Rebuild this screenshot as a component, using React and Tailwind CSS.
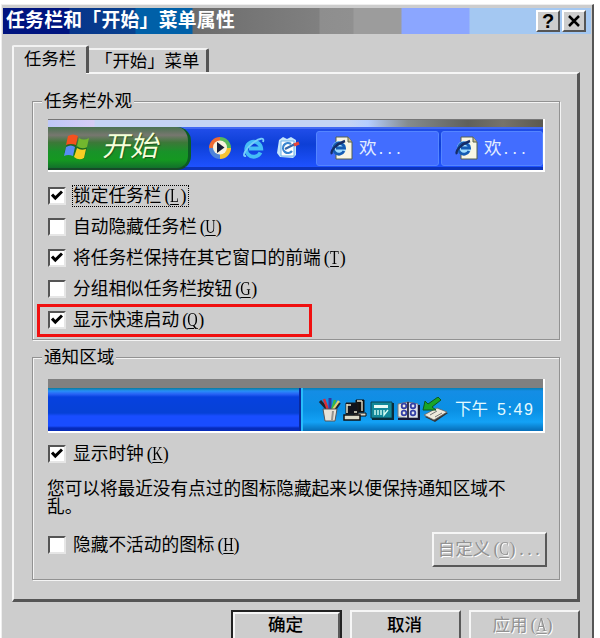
import React from "react";

const FONT = "font-['Liberation_Sans','Noto_Sans_CJK_SC',sans-serif]";

// Keyboard shortcut hint such as (L), in half-width cells
function Key({ k, after = "" }) {
  return (
    <span className="inline-flex font-['Liberation_Serif','Noto_Sans_CJK_SC',serif] text-[18px]">
      <span className="w-[9px] text-right">(</span>
      <span className="w-[9px] text-center">
        <span className="inline-block origin-center scale-x-[0.8] -mx-1 underline underline-offset-2 decoration-1">{k}</span>
      </span>
      <span className="w-[9px] pl-px">)</span>
      {after.split("").map((c, i) => (
        <span key={i} className="w-[8px] text-center">{c}</span>
      ))}
    </span>
  );
}

function Check({ checked, label, k, focus }) {
  return (
    <div className="flex h-[31px] items-center">
      <div className="flex h-[18px] w-[18px] shrink-0 items-center justify-center border-2 border-t-[#555] border-l-[#555] border-r-[#e6e6e6] border-b-[#e6e6e6] bg-white">
        {checked && (
          <svg width="12" height="12" viewBox="0 0 12 12" fill="none" stroke="#000" strokeWidth="3">
            <path d="M1 4.5 L4.3 8 L11 1.5" />
          </svg>
        )}
      </div>
      <div
        className={
          "ml-[6px] flex h-[22px] items-center whitespace-nowrap border border-dotted text-[17.7px] leading-[20px] " +
          (focus ? "border-black" : "border-transparent")
        }
      >
        <span>{label}</span>
        <Key k={k} />
      </div>
    </div>
  );
}

function Group({ title, className, children }) {
  return (
    <fieldset className={"relative ml-[18px] w-[528px] border border-[#929292] shadow-[1px_1px_0_#f4f4f4,inset_1px_1px_0_#f4f4f4] " + className}>
      <span className="absolute -top-[11px] left-[9px] bg-[#cdcdcd] px-[2px] text-[17.6px] leading-[20px]">{title}</span>
      {children}
    </fieldset>
  );
}

function Button({ children, className }) {
  return (
    <div className={"flex items-center justify-center whitespace-nowrap border-2 border-t-[#f6f6f6] border-l-[#f6f6f6] border-r-[#595959] border-b-[#595959] text-[17.6px] " + className}>
      {children}
    </div>
  );
}

function CaptionButton({ children }) {
  return (
    <div className="flex h-[22px] w-[24px] items-center justify-center border-2 border-t-white border-l-white border-r-[#555] border-b-[#555] bg-[#cdcdcd]">
      {children}
    </div>
  );
}

function WindowsFlag() {
  return (
    <svg width="28" height="28" viewBox="0 0 28 28">
      <g opacity="0.4" fill="#123c12">
        <path d="M6 4 Q11 1 15 4 L13 14 L24 15 L21 26 L12 22 L1 20 Z" />
      </g>
      <path d="M5 3 Q10 0 15 3 L13 12 Q8 10 3 12 Z" fill="#f4511e" />
      <path d="M16 5 Q21 8 26 5 L24 14 Q19 17 14 13 Z" fill="#72b72e" />
      <path d="M3 14 Q8 11 12 14 L10 23 Q5 21 1 23 Z" fill="#588df5" />
      <path d="M14 15 Q18 18 23 16 L21 25 Q16 28 11 24 Z" fill="#f6cf24" />
    </svg>
  );
}

function MediaPlayer() {
  return (
    <svg width="24" height="24" viewBox="0 0 24 24">
      <path d="M12 12 L1 12 A11 11 0 0 1 12 1 Z" fill="#ee6a31" />
      <path d="M12 12 L12 1 A11 11 0 0 1 23 12 Z" fill="#58b95a" />
      <path d="M12 12 L23 12 A11 11 0 0 1 12 23 Z" fill="#f5c431" />
      <path d="M12 12 L12 23 A11 11 0 0 1 1 12 Z" fill="#4e83d8" />
      <circle cx="12" cy="11.5" r="7" fill="#f8f2df" />
      <path d="M9 6 L16.5 11.5 L9 17 Z" fill="#161c38" />
    </svg>
  );
}

function Explorer() {
  return (
    <svg width="24" height="24" viewBox="0 0 24 24" fill="none">
      <path d="M18.5 16.5 A7.5 7.5 0 1 1 19.2 12.5 H7" stroke="#45bdf6" strokeWidth="3.8" />
      <path d="M4 20 C-1 21 4 12 11 7 C17 2 23 1 21 6" stroke="#78cefa" strokeWidth="1.8" />
    </svg>
  );
}

function Desktop() {
  return (
    <svg width="24" height="24" viewBox="0 0 24 24">
      <path d="M3 4 L7 1 L11 3 L15 1 L20 4 L20 19 L17 22 L4 21 L1 17 Z" fill="#c4e6fb" />
      <path d="M5 5 H18 V20 H5 Z" fill="#fff" stroke="#6fb0e5" />
      <path d="M15 8 A5 5 0 1 0 16 15" fill="none" stroke="#3a86d0" strokeWidth="2.2" />
      <path d="M9 13 L19 8" stroke="#3568ac" strokeWidth="2.2" />
      <path d="M18 9 L23 7" stroke="#e5473a" strokeWidth="3.2" />
    </svg>
  );
}

function PageIcon() {
  return (
    <svg width="24" height="24" viewBox="0 0 24 24" fill="none">
      <path d="M6 1 H18 L22 6 V23 H6 Z" fill="#f8f5e5" stroke="#55604f" />
      <path d="M18 1 V6 H22" fill="#c9b98c" stroke="#55604f" />
      <circle cx="9" cy="12" r="7" fill="#9fdcff" />
      <path d="M14 15 A5.6 5.6 0 1 1 14.5 12 H6" stroke="#145bb4" strokeWidth="2.8" />
      <path d="M2 18 C0 15 6 8 15 5" stroke="#152c65" strokeWidth="2.4" />
    </svg>
  );
}

function TaskButton({ className }) {
  return (
    <div className={"flex h-[35px] items-center rounded-[3px] border border-[#5485ff] bg-[#426dff] pl-[13px] text-[17.6px] text-[#e2edff] " + className}>
      <PageIcon />
      <span className="ml-[5px]">欢</span>
      <span className="ml-[2px] tracking-[3.8px]">...</span>
    </div>
  );
}

function TrayIcons() {
  return (
    <svg width="130" height="26" viewBox="0 0 130 26">
      {/* pencil cup */}
      <path d="M10 13 L2 4" stroke="#20232b" strokeWidth="3" />
      <path d="M10 13 L6 2" stroke="#da2d37" strokeWidth="2.5" />
      <path d="M12 13 L12 1" stroke="#3238a0" strokeWidth="3" />
      <path d="M14 13 L17 3" stroke="#39b943" strokeWidth="2.5" />
      <path d="M15 13 L21 4" stroke="#e6d36b" strokeWidth="2.5" />
      <path d="M17 13 L22 6" stroke="#1c2433" strokeWidth="2" />
      <path d="M5 12 H19 L17 24 H7 Z" fill="#e6e2d8" stroke="#55565a" />
      <path d="M15 14 L14 23" stroke="#93938f" strokeWidth="2" />
      {/* networked computers */}
      <path d="M38 3 H46 V15 H38 Z" fill="#111" stroke="#111" />
      <path d="M39 4 H44 M44 4 V14" stroke="#dddcca" strokeWidth="1.4" />
      <path d="M36 16 H48 V19 H36 Z" fill="#d8d6cb" stroke="#111" />
      <path d="M28 6 H40 V17 H28 Z" fill="#10131c" stroke="#1a1a1a" />
      <path d="M29 7 V16 M29 8 H33 M36 15 H39" stroke="#e8e6cb" strokeWidth="1.5" />
      <path d="M26 18 H42 V23 H26 Z" fill="#dcdbc9" stroke="#111" strokeWidth="1.5" />
      {/* meter */}
      <path d="M53 5 H74 V21 H53 Z" fill="#13899a" stroke="#0b4352" />
      <path d="M54 22 H75 V6" fill="none" stroke="#092d3b" strokeWidth="2" />
      <path d="M56 8 H70 V11 H56 Z" fill="#e8faf5" />
      <path d="M57 13 V18 M60 13 V18 M63 13 V18 M66 13 V18 L70 13" fill="none" stroke="#d5fff4" strokeWidth="1.4" />
      {/* address book */}
      <path d="M80 7 L90 5 V21 L80 20 Z" fill="#efecdf" stroke="#707484" />
      <path d="M90 5 L100 7 V21 H90 Z" fill="#dfe3ee" stroke="#707484" />
      <path d="M80 22 H101 V8" fill="none" stroke="#171735" strokeWidth="2" />
      <path d="M90 5 V21" stroke="#171735" strokeWidth="1.5" />
      <g fill="none" stroke="#3540a6" strokeWidth="1.8">
        <circle cx="86" cy="9" r="2.3" />
        <circle cx="86" cy="16" r="2.3" />
        <circle cx="95" cy="9" r="2.3" />
        <circle cx="95" cy="16" r="2.3" />
      </g>
      {/* safely remove hardware */}
      <path d="M107 20 L120 13 L130 16 L117 25 Z" fill="#333" />
      <path d="M106 18 L119 11 L129 15 L116 23 Z" fill="#eeeadc" stroke="#666" strokeWidth="0.8" />
      <path d="M112 18 L119 14 M117 20 L124 16" stroke="#777" />
      <path d="M105 13 L107 4 L110 7 L120 0 L123 3 L114 10 L118 13 Z" fill="#19a529" stroke="#0d5a20" />
    </svg>
  );
}

const embossed = "text-[#929292] [text-shadow:1px_1px_0_#fff]";

export default function App() {
  return (
    <div className={"flex h-[638px] w-[600px] overflow-hidden bg-white pt-[4px] pl-[1px] text-black " + FONT}>
      <div className="h-[634px] w-[593px] border-t border-l border-r-2 border-t-[#eeeeee] border-l-[#eeeeee] border-r-[#555] bg-[#cdcdcd]">
        {/* title bar */}
        <div className="mt-[3px] ml-px flex h-[26px] w-[588px] items-center bg-[linear-gradient(to_right,#00147f_0px,#00147f_66px,#07358b_67px,#08418e_132px,#0060a8_133px,#0060a8_189px,#6b6b6b_190px,#757575_245px,#808080_316px,#8e8e8e_317px,#909090_350px,#9c9c9c_351px,#9c9c9c_398px,#8ba6ff_399px,#8ba6ff_466px,#a4c8f2_467px)]">
          <span className="ml-[3px] flex-1 whitespace-nowrap text-[18.8px] leading-[24px] font-bold tracking-[0.3px] text-white">任务栏和「开始」菜单属性</span>
          <div className="mr-[5px] flex gap-[2px]">
            <CaptionButton><span className="text-[20px] leading-[18px] font-bold">?</span></CaptionButton>
            <CaptionButton>
              <svg width="12" height="12" viewBox="0 0 12 12" stroke="#000" strokeWidth="2.5"><path d="M1 1 L11 11 M11 1 L1 11" /></svg>
            </CaptionButton>
          </div>
        </div>

        {/* tabs */}
        <div className="mt-[11px] ml-[10px] flex h-[28px] items-end text-[17.4px]">
          <div className="relative z-10 h-[28px] w-[77px] rounded-tl-[2px] rounded-tr-[2px] border-t-2 border-r-[3px] border-l-2 border-t-[#f2f2f2] border-r-[#555] border-l-[#f6f6f6] bg-[#cdcdcd] pl-[10px] leading-[24px] whitespace-nowrap">任务栏</div>
          <div className="h-[25px] w-[120px] rounded-tr-[2px] border-t-2 border-r-[3px] border-t-[#f2f2f2] border-r-[#555] pl-[6px] leading-[23px] whitespace-nowrap">「开始」菜单</div>
        </div>

        {/* tab page */}
        <div className="relative -mt-px ml-[10px] flex h-[530px] w-[568px] flex-col border-t-2 border-r-[3px] border-b-[3px] border-l-2 border-t-[#f6f6f6] border-r-[#555] border-b-[#555] border-l-[#f6f6f6]">
          <div className="absolute -top-[2px] left-0 h-[3px] w-[72px] bg-[#cdcdcd]" />
          <Group title="任务栏外观" className="mt-[27px] h-[239px] shrink-0 pt-[17px] pl-[15px]">
            {/* taskbar preview */}
            <div className="flex h-[53px] w-[497px] flex-col border-r-2 border-b-2 border-white bg-[#1c45dd]">
              <div className="h-[8px] border-t border-[#777] bg-[linear-gradient(to_right,#bec8f8_0px,#d6cdf5_46px,#c4d4f4_47px,#c4d4f4_300px,#b5ceff_320px,#858c8e_360px,#5f605c_420px,#77736a_455px,#5b5951_494px)]" />
              <div className="flex flex-1 items-center border-t-2 border-b-[3px] border-t-[#4269f2] border-b-[#0d34bb] bg-[linear-gradient(#204de9,#0d3fd6_40%,#1e52ff)]">
                <div className="-my-[5px] flex h-[43px] w-[143px] items-center rounded-r-[14px] border-r-[3px] border-b-2 border-r-[#0c5c25] border-b-[#174a29] bg-[linear-gradient(#497350,#77776f_20%,#3c7838_38%,#199229_60%,#159821_80%,#12702b)] pl-[15px]">
                  <WindowsFlag />
                  <span className="ml-[13px] inline-block -skew-x-12 text-[28px] leading-[32px] whitespace-nowrap text-[#f7ffd9] [text-shadow:1px_1px_1px_#16521c]">开始</span>
                </div>
                <div className="ml-[17px] flex gap-[10px]">
                  <MediaPlayer /><Explorer /><Desktop />
                </div>
                <TaskButton className="ml-[16px] w-[123px]" />
                <TaskButton className="ml-[2px] flex-1" />
              </div>
            </div>
            <div className="mt-[8px]">
              <Check checked focus label="锁定任务栏" k="L" />
              <Check label="自动隐藏任务栏" k="U" />
              <Check checked label="将任务栏保持在其它窗口的前端" k="T" />
              <Check label="分组相似任务栏按钮" k="G" />
              <div className="-ml-[11px] h-[33px] w-[275px] border-[3px] border-[#f01010] pl-[8px]">
                <div className="-mt-[3px]"><Check checked label="显示快速启动" k="Q" /></div>
              </div>
            </div>
          </Group>

          <Group title="通知区域" className="mt-[17px] h-[223px] shrink-0 pt-[21px] pl-[15px]">
            {/* notification area preview */}
            <div className="flex h-[54px] w-[497px] flex-col border-r-2 border-b-2 border-white">
              <div className="h-[9px] bg-[#808080]" />
              <div className="flex flex-1">
                <div className="w-[253px] bg-[linear-gradient(#087c9c_0px,#278ff8_3px,#2863f6_6px,#0641df_9px,#0641d6_25px,#194dff_28px,#194dff_38px,#062bba_40px)]" />
                <div className="flex flex-1 items-center border-l-2 border-l-[#28bdfa] bg-[linear-gradient(#087fb2_0px,#148de5_3px,#0a90e4_22px,#13a2f6_34px,#0872bd_42px)] shadow-[-2px_0_0_#0a299d]">
                  <div className="ml-[15px]"><TrayIcons /></div>
                  <span className="ml-[7px] text-[16.5px] whitespace-nowrap text-[#e3faff]">下午</span>
                  <span className="ml-[9px] font-['Liberation_Sans',sans-serif] text-[16px] tracking-[1.6px] text-[#e3faff]">5:49</span>
                </div>
              </div>
            </div>
            <div className="mt-[5px]"><Check checked label="显示时钟" k="K" /></div>
            <p className="mt-[11px] -ml-px w-[480px] text-[17.65px] leading-[18px] whitespace-nowrap">您可以将最近没有点过的图标隐藏起来以便保持通知区域不<br />乱。</p>
            <div className="flex items-start">
              <div className="mt-[13px]"><Check label="隐藏不活动的图标" k="H" /></div>
              <Button className={"mt-[16px] ml-auto mr-[12px] h-[35px] w-[115px] " + embossed}>自定义<Key k="C" after="..." /></Button>
            </div>
          </Group>
        </div>

        {/* dialog buttons */}
        <div className="mt-[8px] ml-[229px] flex gap-[8px]">
          <div className="h-[35px] w-[111px] border-2 border-[#222]">
            <Button className="h-[31px] w-[107px] pr-[2px] pb-[4px] font-medium">确定</Button>
          </div>
          <Button className="h-[35px] w-[111px] pr-[2px] pb-[4px] font-medium">取消</Button>
          <Button className={"h-[35px] w-[111px] pr-[2px] pb-[4px] " + embossed}>应用<Key k="A" /></Button>
        </div>
      </div>
    </div>
  );
}
